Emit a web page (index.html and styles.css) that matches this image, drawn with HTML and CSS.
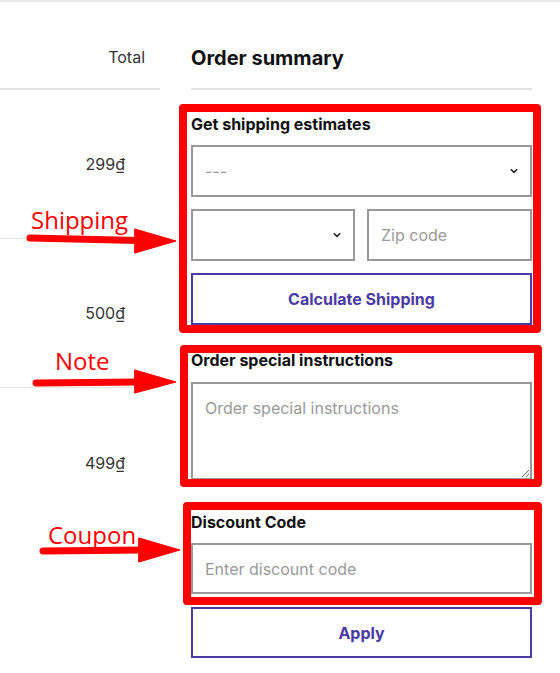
FILE: index.html
```html
<!DOCTYPE html>
<html lang="en">
<head>
<meta charset="utf-8">
<title>Cart - Order summary</title>
<link rel="stylesheet" href="styles.css">
</head>
<body>
<div class="page">
  <div class="cart">
    <div class="col-left">
      <div class="head-left">Total</div>
      <div class="row"><span class="price">299₫</span></div>
      <div class="row"><span class="price">500₫</span></div>
      <div class="row last"><span class="price">499₫</span></div>
    </div>
    <div class="col-right">
      <div class="head-right">Order summary</div>
      <section class="block ship">
        <h3 class="label">Get shipping estimates</h3>
        <div class="select wide"><span class="sel-text">---</span>
          <svg class="chev" width="10" height="6" viewBox="0 0 10 6"><path d="M1.8 1.3 L5 4.4 L8.2 1.3" fill="none" stroke="#222" stroke-width="1.5"/></svg>
        </div>
        <div class="pair">
          <div class="select"><span class="sel-text"></span>
            <svg class="chev" width="10" height="6" viewBox="0 0 10 6"><path d="M1.8 1.3 L5 4.4 L8.2 1.3" fill="none" stroke="#222" stroke-width="1.5"/></svg>
          </div>
          <input class="field" type="text" placeholder="Zip code">
        </div>
        <button class="btn">Calculate Shipping</button>
      </section>
      <section class="block note">
        <h3 class="label">Order special instructions</h3>
        <textarea class="area" placeholder="Order special instructions"></textarea>
      </section>
      <section class="block coupon">
        <h3 class="label">Discount Code</h3>
        <input class="field full" type="text" placeholder="Enter discount code">
        <button class="btn apply">Apply</button>
      </section>
    </div>
  </div>

  <div class="mark mark-ship"></div>
  <div class="mark mark-note"></div>
  <div class="mark mark-coupon"></div>
  <div class="tag tag-ship">Shipping</div>
  <div class="tag tag-note">Note</div>
  <div class="tag tag-coupon">Coupon</div>
  <svg class="arrows" width="560" height="673" viewBox="0 0 560 673">
    <g fill="#ff0000" stroke="#ff0000" stroke-linecap="round">
      <line x1="30" y1="238" x2="138" y2="240.5" stroke-width="7"/>
      <polygon points="135,229 176,241 135,253" stroke-width="1"/>
      <line x1="36" y1="383" x2="138" y2="382" stroke-width="7"/>
      <polygon points="135,370 176,382 135,393" stroke-width="1"/>
      <line x1="43" y1="551" x2="142" y2="550" stroke-width="7"/>
      <polygon points="139,538 180,550 139,562" stroke-width="1"/>
    </g>
  </svg>
</div>
</body>
</html>
```
FILE: styles.css
```css
* { box-sizing: border-box; }
html, body { margin: 0; padding: 0; background: #fff; }
body {
  font-family: Inter, "Liberation Sans", Arial, sans-serif;
  color: #111;
}
.page {
  position: relative;
  width: 560px;
  height: 673px;
  overflow: hidden;
  border-top: 2px solid #e9e9e9;
}
.cart {
  display: flex;
  gap: 31px;
  padding-right: 28px;
}
.col-left { width: 160px; flex: none; }
.col-right { flex: 1; }
.head-left, .head-right {
  height: 88px;
  border-bottom: 2px solid #e3e3e3;
  display: flex;
  align-items: flex-end;
}
.head-left {
  justify-content: flex-end;
  padding-right: 15px;
  font-size: 16px;
  color: #333;
  padding-bottom: 21px;
}
.head-right {
  font-size: 20px;
  font-weight: 700;
  color: #111;
  padding-bottom: 18px;
}
.row {
  height: 149px;
  border-bottom: 1px solid #e6e6e6;
  display: flex;
  align-items: center;
  justify-content: flex-end;
  padding-right: 35px;
}
.row.last { border-bottom: none; }
.price { font-size: 16px; color: #333; }

.block { display: flex; flex-direction: column; }
.label {
  margin: 0;
  font-size: 16px;
  line-height: 20px;
  font-weight: 700;
  color: #111;
}
.ship { margin-top: 24px; gap: 12px; }
.ship .label { margin-bottom: -1px; }
.select {
  height: 52px;
  border: 2px solid #999;
  display: flex;
  align-items: center;
  justify-content: space-between;
  padding: 0 11px 0 12px;
  background: #fff;
}
.sel-text { font-size: 16px; color: #999; }
.chev { flex: none; }
.pair {
  display: grid;
  grid-template-columns: 164px 1fr;
  gap: 12px;
}
.field {
  height: 52px;
  border: 2px solid #999;
  border-radius: 0;
  padding: 0 12px;
  font-family: Inter, "Liberation Sans", Arial, sans-serif;
  font-size: 16px;
  color: #333;
  background: #fff;
  outline: none;
  width: 100%;
}
.field::placeholder, .area::placeholder { color: #999; }
.btn {
  height: 52px;
  border: 2px solid #4a3aa6;
  border-radius: 0;
  background: #fff;
  color: #4a3aa6;
  font-family: Inter, "Liberation Sans", Arial, sans-serif;
  font-size: 16px;
  font-weight: 700;
  cursor: pointer;
}
.note { margin-top: 25px; gap: 12px; }
.area {
  height: 98px;
  border: 2px solid #999;
  border-radius: 0;
  padding: 14px 12px;
  font-family: Inter, "Liberation Sans", Arial, sans-serif;
  font-size: 16px;
  resize: vertical;
  outline: none;
}
.coupon { margin-top: 32px; gap: 11px; }
.coupon .field { height: 51px; }
.apply { margin-top: 2px; height: 51px; }

/* annotation overlay */
.mark {
  position: absolute;
  border: 8px solid #ff0000;
  border-radius: 4px;
}
.mark-ship { left: 179px; top: 102px; width: 362px; height: 229px; }
.mark-note { left: 180px; top: 343px; width: 362px; height: 142px; }
.mark-coupon { left: 183px; top: 500px; width: 359px; height: 103px; }
.tag {
  position: absolute;
  font-family: "Open Sans", "DejaVu Sans", sans-serif;
  font-size: 24px;
  line-height: 30px;
  color: #ff0000;
}
.tag-ship { left: 31px; top: 203px; }
.tag-note { left: 55px; top: 344px; }
.tag-coupon { left: 48px; top: 518px; }
.arrows { position: absolute; left: 0; top: -2px; pointer-events: none; }
```
